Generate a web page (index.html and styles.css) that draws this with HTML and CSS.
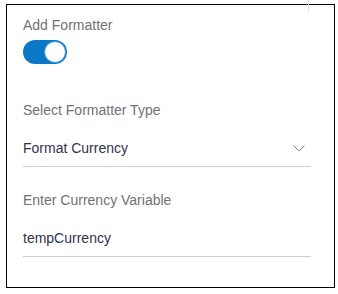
FILE: index.html
```html
<!DOCTYPE html>
<html lang="en">
<head>
    <meta charset="UTF-8">
    <meta name="viewport" content="width=device-width, initial-scale=1.0">
    <title>Formatter</title>
    <link rel="stylesheet" href="styles.css">
</head>
<body>
<div class="edge-line"></div>
<div class="card">
    <div class="field-label">Add Formatter</div>
    <div class="toggle is-on">
        <div class="toggle-knob"></div>
    </div>

    <div class="field-label label-select">Select Formatter Type</div>
    <div class="select-box">
        <span class="value">Format Currency</span>
        <svg class="chevron" width="12" height="7" viewBox="0 0 12 7">
            <polyline points="0.5,0.5 6,6 11.5,0.5" fill="none" stroke="#8a8a8a" stroke-width="1"/>
        </svg>
    </div>

    <div class="field-label label-input">Enter Currency Variable</div>
    <div class="text-input">
        <span class="value">tempCurrency</span>
    </div>
</div>
</body>
</html>
```

FILE: styles.css
```css
html, body {
    margin: 0;
    padding: 0;
    background: #fff;
}

body {
    font-family: "Liberation Sans", Arial, sans-serif;
    font-size: 14px;
    position: relative;
}

.edge-line {
    position: absolute;
    left: 308px;
    top: 0;
    width: 1px;
    height: 12px;
    background: #e2e2e2;
}

.card {
    margin: 4px 0 0 6px;
    width: 329px;
    height: 284px;
    box-sizing: border-box;
    border: 1px solid #000;
    padding: 10px 23px 0 16px;
}

.field-label {
    color: #727272;
    line-height: 20px;
}

.toggle {
    margin-top: 5px;
    width: 44px;
    height: 24px;
    border-radius: 12px;
    background: #0b78c6;
    display: flex;
    align-items: center;
    justify-content: flex-end;
    padding: 0 1px;
    box-sizing: border-box;
}

.toggle-knob {
    width: 22px;
    height: 22px;
    border-radius: 50%;
    background: #fff;
    box-sizing: border-box;
    border: 1px solid #3f95d4;
}

.label-select {
    margin-top: 36px;
}

.label-input {
    margin-top: 23px;
}

.select-box, .text-input {
    margin-top: 9px;
    padding: 9px 0 8px;
    border-bottom: 1px solid #cfcfcf;
    display: flex;
    align-items: center;
    justify-content: space-between;
    line-height: 20px;
}

.value {
    color: #33334a;
}

.chevron {
    margin-right: 6px;
}
```
